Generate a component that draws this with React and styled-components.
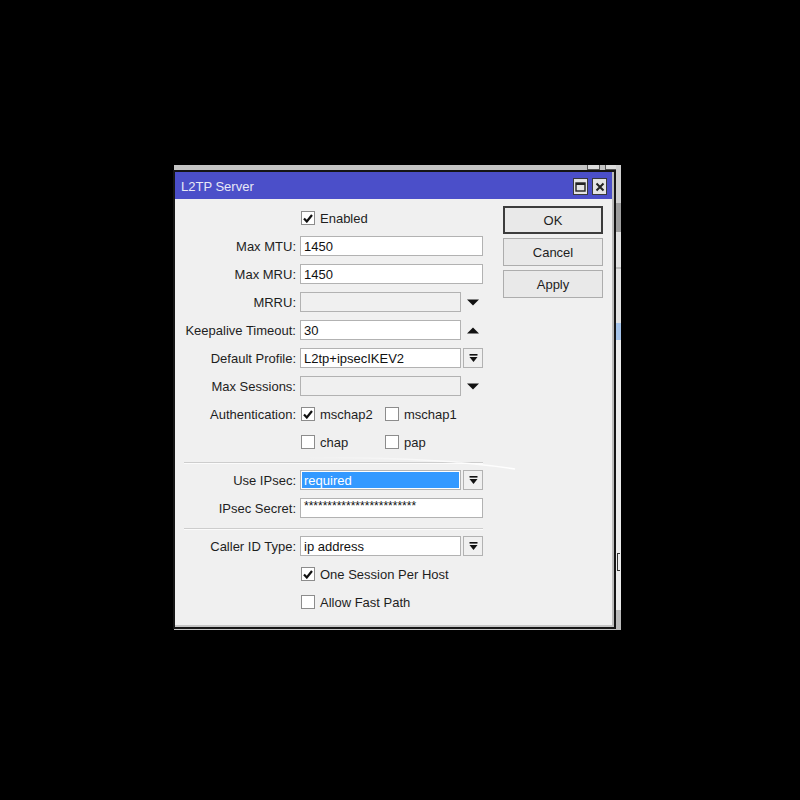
import React from "react";
import styled, { createGlobalStyle } from "styled-components";

const Global = createGlobalStyle`
  html, body { margin: 0; padding: 0; background: #000; }
  * { box-sizing: border-box; }
`;

const FONT = `"Liberation Sans", Arial, sans-serif`;

const Desktop = styled.div`
  position: relative;
  width: 800px;
  height: 800px;
  background: #000;
  overflow: hidden;
  font-family: ${FONT};
`;

const BackWindow = styled.div`
  position: absolute;
  left: 174px;
  top: 165px;
  width: 447px;
  height: 465px;
  background: #c4c4c4;
`;

const BackStrip = styled.div`
  position: absolute;
  right: 0;
  top: 0;
  width: 5px;
  height: 100%;
  background: linear-gradient(
    to bottom,
    #cfcfcf 0 38px,
    #9e9e9e 38px 67px,
    #e2e2e2 67px 102px,
    #bdbdbd 102px 104px,
    #e2e2e2 104px 158px,
    #a6c4ea 158px 175px,
    #ececec 175px 445px,
    #bababa 445px 465px
  );
`;

const BackButton = styled.div`
  position: absolute;
  top: 0;
  left: ${(p) => p.$left}px;
  width: 13px;
  height: 5px;
  border: 1px solid #555;
  border-top: none;
  background: #dcdcdc;
`;

const BackBracket = styled.div`
  position: absolute;
  right: 1px;
  top: 388px;
  width: 3px;
  height: 18px;
  border: 1px solid #333;
  border-right: none;
`;

const Dialog = styled.div`
  position: absolute;
  left: 175px;
  top: 172px;
  width: 439px;
  height: 455px;
  display: flex;
  flex-direction: column;
  background: #f0f0f0;
  border-right: 2px solid #bcbcbc;
  border-bottom: 2px solid #c6c6c6;
  box-shadow: 0 0 0 2px #151515;
`;

const TitleBar = styled.div`
  height: 27px;
  flex: none;
  background: #4b4fc9;
  display: flex;
  align-items: center;
  justify-content: space-between;
  padding: 2px 5px 0 6px;
`;

const Title = styled.div`
  color: #e8e8f6;
  font-size: 13px;
  font-family: ${FONT};
`;

const TitleButtons = styled.div`
  display: flex;
  gap: 4px;
`;

const TitleButton = styled.div`
  width: 15px;
  height: 17px;
  background: #e4e4e4;
  border: 1px solid #3a3a3a;
  display: flex;
  align-items: center;
  justify-content: center;
`;

const Body = styled.div`
  flex: 1;
  display: flex;
  align-items: flex-start;
  gap: 20px;
`;

const Form = styled.div`
  display: flex;
  flex-direction: column;
  padding-top: 5px;
`;

const Row = styled.div`
  height: 28px;
  display: grid;
  grid-template-columns: 121px 183px;
  column-gap: 4px;
  align-items: center;
`;

const Label = styled.div`
  text-align: right;
  font-size: 13px;
  color: #1e1e1e;
  white-space: nowrap;
`;

const Field = styled.div`
  display: flex;
  align-items: center;
  gap: 2px;
`;

const Input = styled.div`
  width: ${(p) => (p.$short ? 161 : 183)}px;
  height: 20px;
  border: 1px solid #b2b2b2;
  background: ${(p) => (p.$disabled ? "#f0f0f0" : "#fff")};
  padding: 1px;
  display: flex;
  align-items: center;
  font-size: ${(p) => (p.$secret ? 12 : 13)}px;
  color: #111;
  white-space: nowrap;
  overflow: hidden;
`;

const InputText = styled.span`
  display: flex;
  align-items: center;
  height: 100%;
  flex: 1;
  padding-left: 2px;
  background: ${(p) => (p.$selected ? "#3399ff" : "transparent")};
  color: ${(p) => (p.$selected ? "#fff" : "#111")};
  padding-bottom: ${(p) => (p.$secret ? "4px" : "0")};
`;

const DropButton = styled.div`
  width: 20px;
  height: 20px;
  border: 1px solid #b2b2b2;
  background: #f0f0f0;
  display: flex;
  align-items: center;
  justify-content: center;
`;

const Spin = styled.div`
  width: 20px;
  height: 20px;
  display: flex;
  align-items: center;
  justify-content: center;
`;

const Checks = styled.div`
  display: flex;
  align-items: center;
`;

const CheckItem = styled.div`
  display: flex;
  align-items: center;
  gap: 5px;
  width: ${(p) => (p.$w ? `${p.$w}px` : "auto")};
  padding-left: 1px;
  font-size: 13px;
  color: #1e1e1e;
  white-space: nowrap;
`;

const Box = styled.div`
  width: 14px;
  height: 14px;
  border: 1px solid #8c8c8c;
  background: #fff;
  display: flex;
  align-items: center;
  justify-content: center;
  flex: none;
`;

const Separator = styled.div`
  height: 10px;
  display: flex;
  align-items: flex-start;
  padding-top: 6px;
  padding-left: 9px;
`;

const SepLine = styled.div`
  width: 299px;
  height: 2px;
  border-top: 1px solid #cdcdcd;
  border-bottom: 1px solid #fbfbfb;
`;

const Buttons = styled.div`
  display: flex;
  flex-direction: column;
  gap: 4px;
  padding-top: 7px;
`;

const Button = styled.div`
  width: 100px;
  height: 28px;
  display: flex;
  align-items: center;
  justify-content: center;
  font-size: 13px;
  color: #1e1e1e;
  background: #e9e9e9;
  border: ${(p) => (p.$default ? "2px solid #3d3d3d" : "1px solid #adadad")};
`;

const Streak = styled.svg`
  position: absolute;
  left: 0;
  top: 0;
  pointer-events: none;
`;

const Check = () => (
  <svg width="10" height="9" viewBox="0 0 10 9">
    <path d="M1 4.5 L3.8 7.5 L9 1" fill="none" stroke="#111" strokeWidth="2.2" />
  </svg>
);

const CheckBox = ({ checked, label, w }) => (
  <CheckItem $w={w}>
    <Box>{checked && <Check />}</Box>
    {label}
  </CheckItem>
);

const DropGlyph = () => (
  <svg width="9" height="9" viewBox="0 0 9 9">
    <rect x="0.5" y="0" width="8" height="1.6" fill="#111" />
    <polygon points="0.5,3 8.5,3 4.5,8" fill="#111" />
  </svg>
);

const Triangle = ({ up }) => (
  <svg width="12" height="7" viewBox="0 0 12 7">
    <polygon points={up ? "0,6.5 12,6.5 6,0.5" : "0,0.5 12,0.5 6,6.5"} fill="#111" />
  </svg>
);

const TextRow = ({ label, value, short, disabled, children, selected, secret }) => (
  <Row>
    <Label>{label}</Label>
    <Field>
      <Input $short={short} $disabled={disabled} $secret={secret}>
        <InputText $selected={selected} $secret={secret}>{value}</InputText>
      </Input>
      {children}
    </Field>
  </Row>
);

export default function App() {
  return (
    <>
      <Global />
      <Desktop>
        <BackWindow>
          <BackButton $left={413} />
          <BackButton $left={431} />
          <BackStrip />
          <BackBracket />
        </BackWindow>
        <Dialog>
          <TitleBar>
            <Title>L2TP Server</Title>
            <TitleButtons>
              <TitleButton>
                <svg width="11" height="10" viewBox="0 0 11 10">
                  <rect x="1" y="1" width="9" height="8" fill="none" stroke="#222" strokeWidth="1.4" />
                  <rect x="1" y="1" width="9" height="2" fill="#222" />
                </svg>
              </TitleButton>
              <TitleButton>
                <svg width="10" height="10" viewBox="0 0 10 10">
                  <path d="M1.5 1.5 L8.5 8.5 M8.5 1.5 L1.5 8.5" stroke="#222" strokeWidth="2" />
                </svg>
              </TitleButton>
            </TitleButtons>
          </TitleBar>
          <Body>
            <Form>
              <Row>
                <span />
                <Checks>
                  <CheckBox checked label="Enabled" />
                </Checks>
              </Row>
              <TextRow label="Max MTU:" value="1450" />
              <TextRow label="Max MRU:" value="1450" />
              <TextRow label="MRRU:" value="" short disabled>
                <Spin><Triangle /></Spin>
              </TextRow>
              <TextRow label="Keepalive Timeout:" value="30" short>
                <Spin><Triangle up /></Spin>
              </TextRow>
              <TextRow label="Default Profile:" value="L2tp+ipsecIKEV2" short>
                <DropButton><DropGlyph /></DropButton>
              </TextRow>
              <TextRow label="Max Sessions:" value="" short disabled>
                <Spin><Triangle /></Spin>
              </TextRow>
              <Row>
                <Label>Authentication:</Label>
                <Checks>
                  <CheckBox checked label="mschap2" w={84} />
                  <CheckBox label="mschap1" />
                </Checks>
              </Row>
              <Row>
                <span />
                <Checks>
                  <CheckBox label="chap" w={84} />
                  <CheckBox label="pap" />
                </Checks>
              </Row>
              <Separator><SepLine /></Separator>
              <TextRow label="Use IPsec:" value="required" short selected>
                <DropButton><DropGlyph /></DropButton>
              </TextRow>
              <TextRow label="IPsec Secret:" value={"*".repeat(24)} secret />
              <Separator><SepLine /></Separator>
              <TextRow label="Caller ID Type:" value="ip address" short>
                <DropButton><DropGlyph /></DropButton>
              </TextRow>
              <Row>
                <span />
                <Checks>
                  <CheckBox checked label="One Session Per Host" />
                </Checks>
              </Row>
              <Row>
                <span />
                <Checks>
                  <CheckBox label="Allow Fast Path" />
                </Checks>
              </Row>
            </Form>
            <Buttons>
              <Button $default>OK</Button>
              <Button>Cancel</Button>
              <Button>Apply</Button>
            </Buttons>
          </Body>
        </Dialog>
        <Streak width="800" height="800" viewBox="0 0 800 800">
          <defs>
            <linearGradient id="stk" x1="0" x2="1" y1="0" y2="0">
              <stop offset="0" stopColor="#fff" stopOpacity="0" />
              <stop offset="0.6" stopColor="#fff" stopOpacity="0.6" />
              <stop offset="1" stopColor="#fff" stopOpacity="1" />
            </linearGradient>
          </defs>
          <path d="M 300 458 Q 430 456 515 469" fill="none" stroke="url(#stk)" strokeWidth="1.6" />
        </Streak>
      </Desktop>
    </>
  );
}
